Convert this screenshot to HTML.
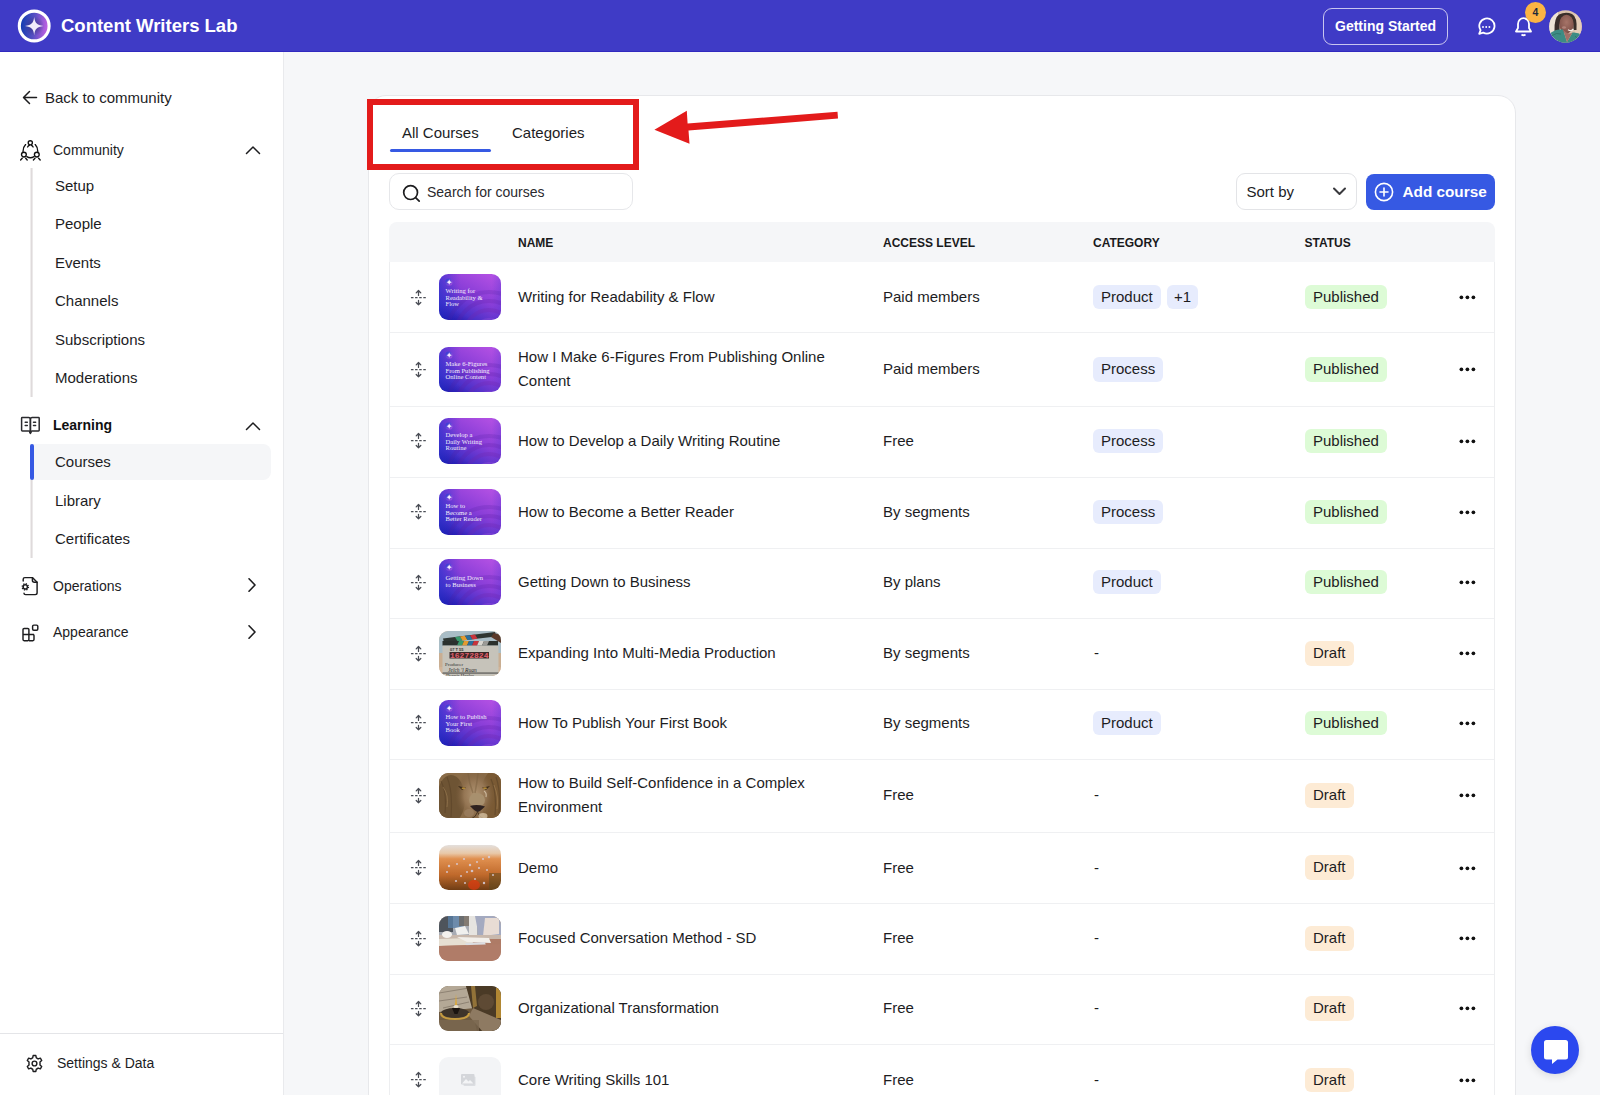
<!DOCTYPE html>
<html><head><meta charset="utf-8">
<style>
*{box-sizing:border-box;margin:0;padding:0}
html,body{width:1600px;height:1095px;overflow:hidden}
body{position:relative;background:#F6F7F9;font-family:"Liberation Sans",sans-serif;color:#1D1D1F}
.a{position:absolute}
.t{position:absolute;white-space:nowrap;line-height:20px;height:20px}
#hdr{left:0;top:0;width:1600px;height:52px;background:#3F3BC6;border-bottom:1px solid #3129BF}
#side{left:0;top:52px;width:284px;height:1043px;background:#fff;border-right:1px solid #E9EAED}
.s14{font-size:14px}
.s15{font-size:15px}
.vline{position:absolute;width:3px;background:linear-gradient(90deg,#EFEDED 0,#EFEDED 33%,#DFDADB 33%,#DFDADB 66%,#EBE9E9 66%);left:30px}
#card{left:368px;top:95px;width:1148px;height:1100px;background:#fff;border:1px solid #E7E8EB;border-radius:18px}
.row{position:absolute;left:389px;width:1106px;border-bottom:1px solid #EFF0F2}
.thumb{position:absolute;left:439px;width:62.4px;height:45.6px;border-radius:9.5px;overflow:hidden}
.tag{position:absolute;height:24.6px;line-height:24.6px;border-radius:6px;font-size:15px;padding:0 8px;white-space:nowrap}
.cat{background:#E7ECFD}
.pub{background:#DDFBD6}
.dra{background:#FDEBD5}
</style></head>
<body>
<svg width="0" height="0" style="position:absolute"><defs><linearGradient id="pg" x1="0.9" y1="0" x2="0.15" y2="1"><stop offset="0" stop-color="#B652E4"/><stop offset="0.45" stop-color="#8A3ED8"/><stop offset="0.8" stop-color="#4A30C8"/><stop offset="1" stop-color="#1C14A6"/></linearGradient><linearGradient id="pgl" x1="0" y1="0" x2="1" y2="1"><stop offset="0" stop-color="#2040D0"/><stop offset="1" stop-color="#B050E0"/></linearGradient><linearGradient id="pg2" x1="0" y1="0" x2="1" y2="0"><stop offset="0" stop-color="#2A34D0" stop-opacity="0.6"/><stop offset="0.35" stop-color="#2A34D0" stop-opacity="0"/><stop offset="0.85" stop-color="#3A30D0" stop-opacity="0"/><stop offset="1" stop-color="#3A30D0" stop-opacity="0.3"/></linearGradient></defs></svg>
<!-- HEADER -->
<div id="hdr" class="a">
  <svg class="a" style="left:17px;top:9px" width="34" height="34" viewBox="0 0 34 34">
    <defs><linearGradient id="lg" x1="0" y1="0.45" x2="1" y2="0.55"><stop offset="0" stop-color="#0A3AAE"/><stop offset="0.5" stop-color="#5A50C4"/><stop offset="1" stop-color="#CC62E6"/></linearGradient>
    <radialGradient id="lgs" cx="0.5" cy="0.5" r="0.5"><stop offset="0.35" stop-color="#302A70" stop-opacity="0.45"/><stop offset="1" stop-color="#302A70" stop-opacity="0"/></radialGradient></defs>
    <circle cx="17.2" cy="17" r="14.9" fill="url(#lg)" stroke="#fff" stroke-width="3.1"/>
    <circle cx="17.2" cy="17" r="10" fill="url(#lgs)"/>
    <path d="M17.2 8 C18 14.2 19.6 15.8 26.4 17 C19.6 18.2 18 19.8 17.2 26.2 C16.4 19.8 14.8 18.2 8 17 C14.8 15.8 16.4 14.2 17.2 8Z" fill="#F1ECFA"/>
  </svg>
  <div class="t" style="left:61px;top:16px;font-size:18.5px;font-weight:700;color:#fff;line-height:20px">Content Writers Lab</div>
  <div class="a" style="left:1323px;top:8px;width:125px;height:37px;border:1px solid #C9C6EF;border-radius:9px"></div>
  <div class="t" style="left:1335px;top:16px;font-size:14px;font-weight:700;color:#fff">Getting Started</div>
  <svg class="a" style="left:1476px;top:17px" width="20" height="20" viewBox="0 0 20 20" fill="none" stroke="#fff" stroke-width="1.8">
    <path d="M3.2 16.8 L4.6 13.2 A7.6 7.6 0 1 1 7.2 15.6 Z" stroke-linejoin="round"/>
    <circle cx="7" cy="10" r="0.95" fill="#fff" stroke="none"/><circle cx="10.2" cy="10" r="0.95" fill="#fff" stroke="none"/><circle cx="13.4" cy="10" r="0.95" fill="#fff" stroke="none"/>
  </svg>
  <svg class="a" style="left:1514px;top:16px" width="19" height="21" viewBox="0 0 19 21" fill="none" stroke="#fff" stroke-width="1.8">
    <path d="M2 15.5 L17 15.5 L15 12 L15 8 A5.5 5.8 0 0 0 4 8 L4 12 Z" stroke-linejoin="round"/>
    <path d="M7.5 18.5 Q9.5 20 11.5 18.5"/>
  </svg>
  <div class="a" style="left:1525px;top:2px;width:21px;height:21px;border-radius:50%;background:#FCB443;color:#1E2A3A;font-size:10.5px;font-weight:700;text-align:center;line-height:21px">4</div>
  <svg class="a" style="left:1548.5px;top:9.8px" width="33" height="33" viewBox="0 0 33 33"><defs><clipPath id="avc"><circle cx="16.5" cy="16.5" r="16.3"/></clipPath>
<radialGradient id="avf" cx="0.5" cy="0.4" r="0.6"><stop offset="0" stop-color="#A67468"/><stop offset="1" stop-color="#7E5048"/></radialGradient></defs>
<g clip-path="url(#avc)"><rect width="33" height="33" fill="#DCC3AE"/><rect x="0" y="0" width="9" height="33" fill="#EEE4D6"/><rect x="26" y="0" width="7" height="33" fill="#E6CDB8"/>
<path d="M5.5 21 Q5 8 10 4.5 Q16.5 1.5 23 4 Q28.5 7 27.5 20 L24.5 20 Q25 9 17 7 Q10 8 10.5 20 Z" fill="#3A2E2A"/>
<ellipse cx="17.5" cy="14" rx="7.2" ry="9.2" fill="url(#avf)"/>
<ellipse cx="15" cy="17.5" rx="2" ry="1.2" fill="#C89A90" opacity="0.6"/>
<path d="M19.5 20 Q22 21.5 24 19.5" stroke="#F4EEEA" stroke-width="1.4" fill="none" stroke-linecap="round"/>
<path d="M0 33 L0 25 Q4 19 14 19.5 L18 32 L23.5 22.5 Q30 22 34 26 L34 33 Z" fill="#3D8C84"/>
<path d="M14 19.5 L18 32 L23.5 22.5 Q19 25 15.5 21 Z" fill="#A27068"/>
<path d="M2 26 Q8 22 12 24 M26 26 L30 30" stroke="#2E7068" stroke-width="0.8" fill="none"/>
</g></svg>
</div>

<!-- SIDEBAR -->
<div id="side" class="a">
  <svg class="a" style="left:22px;top:38px" width="16" height="15" viewBox="0 0 16 15" fill="none" stroke="#1D1D1F" stroke-width="1.5" stroke-linecap="round" stroke-linejoin="round"><path d="M14.5 7.5 H1.8 M7.5 1.5 L1.5 7.5 L7.5 13.5"/></svg>
  <div class="t s15" style="left:45px;top:35.7px">Back to community</div>

  <svg class="a" style="left:20px;top:87px" width="22" height="22" viewBox="0 0 22 22" fill="none" stroke="#111" stroke-width="1.35" stroke-linecap="round">
    <circle cx="10.3" cy="3.8" r="2.1"/><path d="M7.6 8 Q8.3 6.6 9.4 6.4 M11.3 6.4 Q12.4 6.6 13.1 8"/>
    <circle cx="3.9" cy="15.6" r="2.4"/><path d="M0.6 21 L2.2 19.2 M5.7 19.2 L7.2 21"/>
    <circle cx="16.8" cy="15.6" r="2.4"/><path d="M13.4 21 L15 19.2 M18.6 19.2 L20.2 21"/>
    <path d="M5.6 5.6 Q3 8.2 3 12.6 M15.2 5.6 Q17.8 8.2 17.8 12.6 M6.8 17.6 Q10.4 20 14 17.6"/>
  </svg>
  <div class="t s14" style="left:53px;top:87.6px">Community</div>
  <svg class="a" style="left:245px;top:93px" width="16" height="10" viewBox="0 0 16 10" fill="none" stroke="#1D1D1F" stroke-width="1.5" stroke-linecap="round" stroke-linejoin="round"><path d="M1.5 8.5 L8 2 L14.5 8.5"/></svg>
  <div class="vline" style="top:116px;height:229px"></div>
  <div class="t s15" style="left:55px;top:123.7px">Setup</div>
  <div class="t s15" style="left:55px;top:162.2px">People</div>
  <div class="t s15" style="left:55px;top:200.7px">Events</div>
  <div class="t s15" style="left:55px;top:239.2px">Channels</div>
  <div class="t s15" style="left:55px;top:277.7px">Subscriptions</div>
  <div class="t s15" style="left:55px;top:316.2px">Moderations</div>

  <svg class="a" style="left:20px;top:364px" width="21" height="19" viewBox="0 0 21 19" fill="none" stroke="#2A2A2E" stroke-width="1.5" stroke-linejoin="round" stroke-linecap="round">
    <path d="M2.3 1.6 H8.6 Q10.4 1.6 10.4 3.4 V16.6 Q10.4 15 8.6 15 H2.3 Q1.6 15 1.6 14.3 V2.3 Q1.6 1.6 2.3 1.6 Z"/><path d="M18.5 1.6 H12.2 Q10.4 1.6 10.4 3.4 V16.6 Q10.4 15 12.2 15 H18.5 Q19.2 15 19.2 14.3 V2.3 Q19.2 1.6 18.5 1.6 Z"/>
    <path d="M5.2 6.2 H7.3 M5.2 9.5 H7.3 M13.5 6.2 H15.6 M13.5 9.5 H15.6" stroke-width="1.5"/><path d="M9.6 16.4 L10.4 17.6 L11.2 16.4" stroke-width="1.2"/>
  </svg>
  <div class="t s14" style="left:53px;top:363.3px;font-weight:700;color:#111">Learning</div>
  <svg class="a" style="left:245px;top:369px" width="16" height="10" viewBox="0 0 16 10" fill="none" stroke="#1D1D1F" stroke-width="1.5" stroke-linecap="round" stroke-linejoin="round"><path d="M1.5 8.5 L8 2 L14.5 8.5"/></svg>
  <div class="vline" style="top:392px;height:114px"></div>
  <div class="a" style="left:30px;top:392px;width:241px;height:36px;background:#F5F6F8;border-radius:0 8px 8px 0"></div>
  <div class="a" style="left:30px;top:392px;width:4px;height:36px;background:#3659E3;border-radius:2px"></div>
  <div class="t s15" style="left:55px;top:399.6px">Courses</div>
  <div class="t s15" style="left:55px;top:438.5px">Library</div>
  <div class="t s15" style="left:55px;top:476.9px">Certificates</div>

  <svg class="a" style="left:20px;top:523px" width="20" height="21" viewBox="0 0 20 21" fill="none" stroke="#1D1D1F" stroke-width="1.45" stroke-linejoin="round" stroke-linecap="round">
    <path d="M3.2 6 V4.3 Q3.2 2.6 4.9 2.6 H12.4 L17.1 7.2 V17.8 Q17.1 19.6 15.3 19.6 H5.6 Q4 19.6 4 18.2"/><path d="M12.4 2.6 V5.2 Q12.4 7.2 14.4 7.2 H17.1"/>
    <circle cx="5.3" cy="11.9" r="2.1"/><circle cx="5.3" cy="11.9" r="3.1" stroke-width="1.4" stroke-dasharray="1.25 1.185" stroke-linecap="butt"/>
  </svg>
  <div class="t s14" style="left:53px;top:523.7px">Operations</div>
  <svg class="a" style="left:247px;top:525px" width="10" height="16" viewBox="0 0 10 16" fill="none" stroke="#1D1D1F" stroke-width="1.6" stroke-linecap="round" stroke-linejoin="round"><path d="M2 1.8 L8 8 L2 14.2"/></svg>

  <svg class="a" style="left:20px;top:571px" width="21" height="20" viewBox="0 0 21 20" fill="none" stroke="#1D1D1F" stroke-width="1.45" stroke-linejoin="round">
    <path d="M3 6.5 Q3 5.4 4.1 5.4 H7.8 Q8.9 5.4 8.9 6.5 V16.6 Q8.9 17.7 7.8 17.7 H4.1 Q3 17.7 3 16.6 Z"/><path d="M3 11.4 H14 M8.9 11.4 H12.9 Q14 11.4 14 12.5 V16.6 Q14 17.7 12.9 17.7 H8.9"/>
    <rect x="12.6" y="2.1" width="5.2" height="5.2" rx="1.2"/>
  </svg>
  <div class="t s14" style="left:53px;top:570.3px">Appearance</div>
  <svg class="a" style="left:247px;top:572px" width="10" height="16" viewBox="0 0 10 16" fill="none" stroke="#1D1D1F" stroke-width="1.6" stroke-linecap="round" stroke-linejoin="round"><path d="M2 1.8 L8 8 L2 14.2"/></svg>

  <div class="a" style="left:0;top:981px;width:283px;height:1px;background:#E4E5E8"></div>
  <svg class="a" style="left:25px;top:1002px" width="19" height="19" viewBox="0 0 24 24" fill="none" stroke="#1D1D1F" stroke-width="1.8" stroke-linejoin="round">
    <path d="M10.3 2 H13.7 L14.3 4.9 Q15.6 5.4 16.6 6.2 L19.4 5.2 L21.1 8.2 L18.9 10.1 Q19.1 12 18.9 13.9 L21.1 15.8 L19.4 18.8 L16.6 17.8 Q15.6 18.6 14.3 19.1 L13.7 22 H10.3 L9.7 19.1 Q8.4 18.6 7.4 17.8 L4.6 18.8 L2.9 15.8 L5.1 13.9 Q4.9 12 5.1 10.1 L2.9 8.2 L4.6 5.2 L7.4 6.2 Q8.4 5.4 9.7 4.9 Z"/>
    <circle cx="12" cy="12" r="3"/>
  </svg>
  <div class="t s14" style="left:57px;top:1001px">Settings &amp; Data</div>
</div>

<!-- CARD -->
<div id="card" class="a"></div>
<div class="t" style="left:402px;top:122.7px;font-size:15px">All Courses</div>
<div class="t" style="left:512px;top:122.7px;font-size:15px">Categories</div>
<div class="a" style="left:389.5px;top:148.7px;width:101px;height:3.6px;border-radius:2px;background:#3659E3"></div>
<div class="a" style="left:389px;top:173px;width:244px;height:37px;border:1px solid #E6E7EA;border-radius:10px"></div>
<svg class="a" style="left:402px;top:184px" width="19" height="19" viewBox="0 0 19 19" fill="none" stroke="#1D1D1F" stroke-width="1.7" stroke-linecap="round"><circle cx="8.6" cy="8.6" r="6.9"/><path d="M13.6 13.6 L17.2 17.2"/></svg>
<div class="t" style="left:427px;top:182px;font-size:14px;color:#2A2A2E">Search for courses</div>
<div class="a" style="left:1236px;top:173px;width:121px;height:37px;border:1px solid #E3E4E7;border-radius:9px"></div>
<div class="t" style="left:1246.5px;top:182px;font-size:15px">Sort by</div>
<svg class="a" style="left:1332px;top:186px" width="15" height="11" viewBox="0 0 15 11" fill="none" stroke="#3A3A3E" stroke-width="2" stroke-linecap="round" stroke-linejoin="round"><path d="M2 2.5 L7.5 8 L13 2.5"/></svg>
<div class="a" style="left:1366px;top:174px;width:129px;height:36px;border-radius:8px;background:#3659E3"></div>
<svg class="a" style="left:1374px;top:182px" width="20" height="20" viewBox="0 0 20 20" fill="none" stroke="#fff" stroke-width="1.6" stroke-linecap="round"><circle cx="10" cy="10" r="8.6"/><path d="M10 6 V14 M6 10 H14"/></svg>
<div class="t" style="left:1402.5px;top:181.5px;font-size:15.3px;font-weight:700;color:#fff">Add course</div>
<div class="a" style="left:389px;top:222px;width:1106px;height:40px;background:#F5F6F8;border-radius:8px 8px 0 0"></div>
<div class="a" style="left:389px;top:262px;width:1px;height:900px;background:#EDEEF0"></div>
<div class="a" style="left:1494px;top:262px;width:1px;height:900px;background:#EDEEF0"></div>
<div class="t" style="left:518px;top:233px;font-size:12px;font-weight:700;color:#1A1A1C">NAME</div>
<div class="t" style="left:883px;top:233px;font-size:12px;font-weight:700;color:#1A1A1C">ACCESS LEVEL</div>
<div class="t" style="left:1093px;top:233px;font-size:12px;font-weight:700;color:#1A1A1C">CATEGORY</div>
<div class="t" style="left:1304.5px;top:233px;font-size:12px;font-weight:700;color:#1A1A1C">STATUS</div>
<div class="a" style="left:390px;top:332px;width:1104px;height:1px;background:#EFF0F2"></div>
<div class="a" style="left:390px;top:406px;width:1104px;height:1px;background:#EFF0F2"></div>
<div class="a" style="left:390px;top:477px;width:1104px;height:1px;background:#EFF0F2"></div>
<div class="a" style="left:390px;top:548px;width:1104px;height:1px;background:#EFF0F2"></div>
<div class="a" style="left:390px;top:618px;width:1104px;height:1px;background:#EFF0F2"></div>
<div class="a" style="left:390px;top:689px;width:1104px;height:1px;background:#EFF0F2"></div>
<div class="a" style="left:390px;top:759px;width:1104px;height:1px;background:#EFF0F2"></div>
<div class="a" style="left:390px;top:832px;width:1104px;height:1px;background:#EFF0F2"></div>
<div class="a" style="left:390px;top:903px;width:1104px;height:1px;background:#EFF0F2"></div>
<div class="a" style="left:390px;top:974px;width:1104px;height:1px;background:#EFF0F2"></div>
<div class="a" style="left:390px;top:1044px;width:1104px;height:1px;background:#EFF0F2"></div>
<svg class="a" style="left:410px;top:288.5px" width="17" height="17" viewBox="0 0 17 17" fill="none" stroke="#4A4D55" stroke-width="1.25" stroke-linecap="round" stroke-linejoin="round"><path d="M8.5 1.6 V6.4 M6.2 3.9 L8.5 1.5 L10.8 3.9 M8.5 11.3 V15.8 M6.2 13.5 L8.5 15.8 L10.8 13.5"/><path d="M1.5 8.7 H3 M5.6 8.7 H7.1 M9.7 8.7 H11.2 M13.8 8.7 H15.3" stroke-width="1.3"/></svg>
<div class="thumb th-p1" style="top:274.4px"><svg width="62" height="46" viewBox="0 0 62 46"><rect width="62" height="46" fill="url(#pg)"/><rect width="62" height="46" fill="url(#pg2)"/><circle cx="50" cy="60" r="16" fill="#B060E0" opacity="0.25"/><circle cx="50" cy="60" r="24" fill="none" stroke="#7028B0" stroke-width="4" opacity="0.3"/><circle cx="50" cy="60" r="33" fill="none" stroke="#6020A8" stroke-width="4" opacity="0.25"/><circle cx="50" cy="60" r="42" fill="none" stroke="#5020A0" stroke-width="4" opacity="0.2"/><circle cx="10" cy="8.2" r="3.6" fill="url(#pgl)"/><path d="M10.2 5.6 Q10.6 7.9 12.8 8.2 Q10.6 8.5 10.2 10.8 Q9.8 8.5 7.6 8.2 Q9.8 7.9 10.2 5.6Z" fill="#F4EEFF"/><text x="6.5" y="19.0" font-family="Liberation Serif" font-size="6.6" fill="#fff" opacity="0.92">Writing for</text><text x="6.5" y="25.6" font-family="Liberation Serif" font-size="6.6" fill="#fff" opacity="0.92">Readability &amp;</text><text x="6.5" y="32.2" font-family="Liberation Serif" font-size="6.6" fill="#fff" opacity="0.92">Flow</text></svg></div>
<div class="t" style="left:518px;top:287px;font-size:15px">Writing for Readability &amp; Flow</div>
<div class="t" style="left:883px;top:287px;font-size:15px">Paid members</div>
<div class="tag cat" style="left:1093px;top:284.9px">Product</div>
<div class="tag cat" style="left:1167px;padding:0 7px;top:284.9px">+1</div>
<div class="tag pub" style="left:1305px;top:284.9px">Published</div>
<svg class="a" style="left:1458px;top:294px" width="18" height="6" viewBox="0 0 18 6" fill="#111"><circle cx="3.4" cy="3.3" r="1.85"/><circle cx="9.4" cy="3.3" r="1.85"/><circle cx="15.4" cy="3.3" r="1.85"/></svg>
<svg class="a" style="left:410px;top:360.7px" width="17" height="17" viewBox="0 0 17 17" fill="none" stroke="#4A4D55" stroke-width="1.25" stroke-linecap="round" stroke-linejoin="round"><path d="M8.5 1.6 V6.4 M6.2 3.9 L8.5 1.5 L10.8 3.9 M8.5 11.3 V15.8 M6.2 13.5 L8.5 15.8 L10.8 13.5"/><path d="M1.5 8.7 H3 M5.6 8.7 H7.1 M9.7 8.7 H11.2 M13.8 8.7 H15.3" stroke-width="1.3"/></svg>
<div class="thumb th-p2" style="top:346.6px"><svg width="62" height="46" viewBox="0 0 62 46"><rect width="62" height="46" fill="url(#pg)"/><rect width="62" height="46" fill="url(#pg2)"/><circle cx="50" cy="60" r="16" fill="#B060E0" opacity="0.25"/><circle cx="50" cy="60" r="24" fill="none" stroke="#7028B0" stroke-width="4" opacity="0.3"/><circle cx="50" cy="60" r="33" fill="none" stroke="#6020A8" stroke-width="4" opacity="0.25"/><circle cx="50" cy="60" r="42" fill="none" stroke="#5020A0" stroke-width="4" opacity="0.2"/><circle cx="10" cy="8.2" r="3.6" fill="url(#pgl)"/><path d="M10.2 5.6 Q10.6 7.9 12.8 8.2 Q10.6 8.5 10.2 10.8 Q9.8 8.5 7.6 8.2 Q9.8 7.9 10.2 5.6Z" fill="#F4EEFF"/><text x="6.5" y="19.0" font-family="Liberation Serif" font-size="6.6" fill="#fff" opacity="0.92">Make 6-Figures</text><text x="6.5" y="25.6" font-family="Liberation Serif" font-size="6.6" fill="#fff" opacity="0.92">From Publishing</text><text x="6.5" y="32.2" font-family="Liberation Serif" font-size="6.6" fill="#fff" opacity="0.92">Online Content</text></svg></div>
<div class="t" style="left:518px;top:345.0px;font-size:15px;line-height:24.3px;height:48.6px">How I Make 6-Figures From Publishing Online<br>Content</div>
<div class="t" style="left:883px;top:359.2px;font-size:15px">Paid members</div>
<div class="tag cat" style="left:1093px;top:357.1px">Process</div>
<div class="tag pub" style="left:1305px;top:357.1px">Published</div>
<svg class="a" style="left:1458px;top:366.2px" width="18" height="6" viewBox="0 0 18 6" fill="#111"><circle cx="3.4" cy="3.3" r="1.85"/><circle cx="9.4" cy="3.3" r="1.85"/><circle cx="15.4" cy="3.3" r="1.85"/></svg>
<svg class="a" style="left:410px;top:432.2px" width="17" height="17" viewBox="0 0 17 17" fill="none" stroke="#4A4D55" stroke-width="1.25" stroke-linecap="round" stroke-linejoin="round"><path d="M8.5 1.6 V6.4 M6.2 3.9 L8.5 1.5 L10.8 3.9 M8.5 11.3 V15.8 M6.2 13.5 L8.5 15.8 L10.8 13.5"/><path d="M1.5 8.7 H3 M5.6 8.7 H7.1 M9.7 8.7 H11.2 M13.8 8.7 H15.3" stroke-width="1.3"/></svg>
<div class="thumb th-p3" style="top:418.1px"><svg width="62" height="46" viewBox="0 0 62 46"><rect width="62" height="46" fill="url(#pg)"/><rect width="62" height="46" fill="url(#pg2)"/><circle cx="50" cy="60" r="16" fill="#B060E0" opacity="0.25"/><circle cx="50" cy="60" r="24" fill="none" stroke="#7028B0" stroke-width="4" opacity="0.3"/><circle cx="50" cy="60" r="33" fill="none" stroke="#6020A8" stroke-width="4" opacity="0.25"/><circle cx="50" cy="60" r="42" fill="none" stroke="#5020A0" stroke-width="4" opacity="0.2"/><circle cx="10" cy="8.2" r="3.6" fill="url(#pgl)"/><path d="M10.2 5.6 Q10.6 7.9 12.8 8.2 Q10.6 8.5 10.2 10.8 Q9.8 8.5 7.6 8.2 Q9.8 7.9 10.2 5.6Z" fill="#F4EEFF"/><text x="6.5" y="19.0" font-family="Liberation Serif" font-size="6.6" fill="#fff" opacity="0.92">Develop a</text><text x="6.5" y="25.6" font-family="Liberation Serif" font-size="6.6" fill="#fff" opacity="0.92">Daily Writing</text><text x="6.5" y="32.2" font-family="Liberation Serif" font-size="6.6" fill="#fff" opacity="0.92">Routine</text></svg></div>
<div class="t" style="left:518px;top:430.7px;font-size:15px">How to Develop a Daily Writing Routine</div>
<div class="t" style="left:883px;top:430.7px;font-size:15px">Free</div>
<div class="tag cat" style="left:1093px;top:428.6px">Process</div>
<div class="tag pub" style="left:1305px;top:428.6px">Published</div>
<svg class="a" style="left:1458px;top:437.7px" width="18" height="6" viewBox="0 0 18 6" fill="#111"><circle cx="3.4" cy="3.3" r="1.85"/><circle cx="9.4" cy="3.3" r="1.85"/><circle cx="15.4" cy="3.3" r="1.85"/></svg>
<svg class="a" style="left:410px;top:503.2px" width="17" height="17" viewBox="0 0 17 17" fill="none" stroke="#4A4D55" stroke-width="1.25" stroke-linecap="round" stroke-linejoin="round"><path d="M8.5 1.6 V6.4 M6.2 3.9 L8.5 1.5 L10.8 3.9 M8.5 11.3 V15.8 M6.2 13.5 L8.5 15.8 L10.8 13.5"/><path d="M1.5 8.7 H3 M5.6 8.7 H7.1 M9.7 8.7 H11.2 M13.8 8.7 H15.3" stroke-width="1.3"/></svg>
<div class="thumb th-p4" style="top:489.1px"><svg width="62" height="46" viewBox="0 0 62 46"><rect width="62" height="46" fill="url(#pg)"/><rect width="62" height="46" fill="url(#pg2)"/><circle cx="50" cy="60" r="16" fill="#B060E0" opacity="0.25"/><circle cx="50" cy="60" r="24" fill="none" stroke="#7028B0" stroke-width="4" opacity="0.3"/><circle cx="50" cy="60" r="33" fill="none" stroke="#6020A8" stroke-width="4" opacity="0.25"/><circle cx="50" cy="60" r="42" fill="none" stroke="#5020A0" stroke-width="4" opacity="0.2"/><circle cx="10" cy="8.2" r="3.6" fill="url(#pgl)"/><path d="M10.2 5.6 Q10.6 7.9 12.8 8.2 Q10.6 8.5 10.2 10.8 Q9.8 8.5 7.6 8.2 Q9.8 7.9 10.2 5.6Z" fill="#F4EEFF"/><text x="6.5" y="19.0" font-family="Liberation Serif" font-size="6.6" fill="#fff" opacity="0.92">How to</text><text x="6.5" y="25.6" font-family="Liberation Serif" font-size="6.6" fill="#fff" opacity="0.92">Become a</text><text x="6.5" y="32.2" font-family="Liberation Serif" font-size="6.6" fill="#fff" opacity="0.92">Better Reader</text></svg></div>
<div class="t" style="left:518px;top:501.7px;font-size:15px">How to Become a Better Reader</div>
<div class="t" style="left:883px;top:501.7px;font-size:15px">By segments</div>
<div class="tag cat" style="left:1093px;top:499.6px">Process</div>
<div class="tag pub" style="left:1305px;top:499.6px">Published</div>
<svg class="a" style="left:1458px;top:508.7px" width="18" height="6" viewBox="0 0 18 6" fill="#111"><circle cx="3.4" cy="3.3" r="1.85"/><circle cx="9.4" cy="3.3" r="1.85"/><circle cx="15.4" cy="3.3" r="1.85"/></svg>
<svg class="a" style="left:410px;top:573.5px" width="17" height="17" viewBox="0 0 17 17" fill="none" stroke="#4A4D55" stroke-width="1.25" stroke-linecap="round" stroke-linejoin="round"><path d="M8.5 1.6 V6.4 M6.2 3.9 L8.5 1.5 L10.8 3.9 M8.5 11.3 V15.8 M6.2 13.5 L8.5 15.8 L10.8 13.5"/><path d="M1.5 8.7 H3 M5.6 8.7 H7.1 M9.7 8.7 H11.2 M13.8 8.7 H15.3" stroke-width="1.3"/></svg>
<div class="thumb th-p5" style="top:559.4px"><svg width="62" height="46" viewBox="0 0 62 46"><rect width="62" height="46" fill="url(#pg)"/><rect width="62" height="46" fill="url(#pg2)"/><circle cx="50" cy="60" r="16" fill="#B060E0" opacity="0.25"/><circle cx="50" cy="60" r="24" fill="none" stroke="#7028B0" stroke-width="4" opacity="0.3"/><circle cx="50" cy="60" r="33" fill="none" stroke="#6020A8" stroke-width="4" opacity="0.25"/><circle cx="50" cy="60" r="42" fill="none" stroke="#5020A0" stroke-width="4" opacity="0.2"/><circle cx="10" cy="8.2" r="3.6" fill="url(#pgl)"/><path d="M10.2 5.6 Q10.6 7.9 12.8 8.2 Q10.6 8.5 10.2 10.8 Q9.8 8.5 7.6 8.2 Q9.8 7.9 10.2 5.6Z" fill="#F4EEFF"/><text x="6.5" y="21.0" font-family="Liberation Serif" font-size="6.6" fill="#fff" opacity="0.92">Getting Down</text><text x="6.5" y="27.6" font-family="Liberation Serif" font-size="6.6" fill="#fff" opacity="0.92">to Business</text></svg></div>
<div class="t" style="left:518px;top:572px;font-size:15px">Getting Down to Business</div>
<div class="t" style="left:883px;top:572px;font-size:15px">By plans</div>
<div class="tag cat" style="left:1093px;top:569.9px">Product</div>
<div class="tag pub" style="left:1305px;top:569.9px">Published</div>
<svg class="a" style="left:1458px;top:579px" width="18" height="6" viewBox="0 0 18 6" fill="#111"><circle cx="3.4" cy="3.3" r="1.85"/><circle cx="9.4" cy="3.3" r="1.85"/><circle cx="15.4" cy="3.3" r="1.85"/></svg>
<svg class="a" style="left:410px;top:644.6px" width="17" height="17" viewBox="0 0 17 17" fill="none" stroke="#4A4D55" stroke-width="1.25" stroke-linecap="round" stroke-linejoin="round"><path d="M8.5 1.6 V6.4 M6.2 3.9 L8.5 1.5 L10.8 3.9 M8.5 11.3 V15.8 M6.2 13.5 L8.5 15.8 L10.8 13.5"/><path d="M1.5 8.7 H3 M5.6 8.7 H7.1 M9.7 8.7 H11.2 M13.8 8.7 H15.3" stroke-width="1.3"/></svg>
<div class="thumb th-clap" style="top:630.5px"><svg width="62" height="46" viewBox="0 0 62 46"><rect width="62" height="46" fill="#C9AE92"/><rect width="62" height="22" fill="#A9BDC6"/><rect x="0" y="36" width="62" height="10" fill="#D2B498"/><polygon points="4,7.5 56,1 57,5.5 5,11.5" fill="#2F3632"/><polygon points="16,6 21,5.4 23.5,9.6 18.5,10.2" fill="#3A9A6C"/><polygon points="21,5.4 26,4.8 28.5,9 23.5,9.6" fill="#E39A30"/><polygon points="26,4.8 31,4.2 33.5,8.4 28.5,9" fill="#2A6E9C"/><polygon points="31,4.2 36,3.6 38.5,7.8 33.5,8.4" fill="#C8343C"/><polygon points="55,2 62,4 62,12 52,6" fill="#5A3A2A"/><rect x="3.5" y="10" width="55.5" height="4.6" fill="#2B312D"/><polygon points="18,14.6 20,10 25,10 23,14.6" fill="#3A9A6C"/><polygon points="23,14.6 25,10 30,10 28,14.6" fill="#E39A30"/><polygon points="28,14.6 30,10 35,10 33,14.6" fill="#2A6E9C"/><polygon points="33,14.6 35,10 40,10 38,14.6" fill="#C8343C"/><polygon points="38,14.6 40,10 45,10 43,14.6" fill="#D8D6D0"/><polygon points="43,14.6 45,10 50,10 48,14.6" fill="#9A9A96"/><rect x="3.5" y="14.6" width="56" height="31.4" fill="#C6C3BA"/><text x="11" y="19.5" font-family="Liberation Sans" font-size="4" font-weight="700" fill="#333">07   T    55</text><rect x="10.5" y="21" width="39.5" height="6.5" fill="#3A2828"/><text x="11" y="27" font-family="Liberation Mono" font-size="7.2" font-weight="700" fill="#E0606E" textLength="38.5" lengthAdjust="spacingAndGlyphs">16272824</text><text x="6" y="34.5" font-family="Liberation Serif" font-size="5" fill="#333">Producer</text><text x="9" y="40.5" font-family="Liberation Serif" font-style="italic" font-size="5.5" fill="#2a2a2a">Jelch 'l Ruan</text><rect x="3.5" y="41.6" width="56" height="0.9" fill="#333"/><text x="7" y="46" font-family="Liberation Serif" font-size="4.8" fill="#333">Dennis  Haylar</text></svg></div>
<div class="t" style="left:518px;top:643.1px;font-size:15px">Expanding Into Multi-Media Production</div>
<div class="t" style="left:883px;top:643.1px;font-size:15px">By segments</div>
<div class="t" style="left:1094px;top:643.1px;font-size:15px">-</div>
<div class="tag dra" style="left:1305px;top:641.0px">Draft</div>
<svg class="a" style="left:1458px;top:650.1px" width="18" height="6" viewBox="0 0 18 6" fill="#111"><circle cx="3.4" cy="3.3" r="1.85"/><circle cx="9.4" cy="3.3" r="1.85"/><circle cx="15.4" cy="3.3" r="1.85"/></svg>
<svg class="a" style="left:410px;top:714.4px" width="17" height="17" viewBox="0 0 17 17" fill="none" stroke="#4A4D55" stroke-width="1.25" stroke-linecap="round" stroke-linejoin="round"><path d="M8.5 1.6 V6.4 M6.2 3.9 L8.5 1.5 L10.8 3.9 M8.5 11.3 V15.8 M6.2 13.5 L8.5 15.8 L10.8 13.5"/><path d="M1.5 8.7 H3 M5.6 8.7 H7.1 M9.7 8.7 H11.2 M13.8 8.7 H15.3" stroke-width="1.3"/></svg>
<div class="thumb th-p7" style="top:700.3px"><svg width="62" height="46" viewBox="0 0 62 46"><rect width="62" height="46" fill="url(#pg)"/><rect width="62" height="46" fill="url(#pg2)"/><circle cx="50" cy="60" r="16" fill="#B060E0" opacity="0.25"/><circle cx="50" cy="60" r="24" fill="none" stroke="#7028B0" stroke-width="4" opacity="0.3"/><circle cx="50" cy="60" r="33" fill="none" stroke="#6020A8" stroke-width="4" opacity="0.25"/><circle cx="50" cy="60" r="42" fill="none" stroke="#5020A0" stroke-width="4" opacity="0.2"/><circle cx="10" cy="8.2" r="3.6" fill="url(#pgl)"/><path d="M10.2 5.6 Q10.6 7.9 12.8 8.2 Q10.6 8.5 10.2 10.8 Q9.8 8.5 7.6 8.2 Q9.8 7.9 10.2 5.6Z" fill="#F4EEFF"/><text x="6.5" y="19.0" font-family="Liberation Serif" font-size="6.6" fill="#fff" opacity="0.92">How to Publish</text><text x="6.5" y="25.6" font-family="Liberation Serif" font-size="6.6" fill="#fff" opacity="0.92">Your First</text><text x="6.5" y="32.2" font-family="Liberation Serif" font-size="6.6" fill="#fff" opacity="0.92">Book</text></svg></div>
<div class="t" style="left:518px;top:712.9px;font-size:15px">How To Publish Your First Book</div>
<div class="t" style="left:883px;top:712.9px;font-size:15px">By segments</div>
<div class="tag cat" style="left:1093px;top:710.8px">Product</div>
<div class="tag pub" style="left:1305px;top:710.8px">Published</div>
<svg class="a" style="left:1458px;top:719.9px" width="18" height="6" viewBox="0 0 18 6" fill="#111"><circle cx="3.4" cy="3.3" r="1.85"/><circle cx="9.4" cy="3.3" r="1.85"/><circle cx="15.4" cy="3.3" r="1.85"/></svg>
<svg class="a" style="left:410px;top:786.9px" width="17" height="17" viewBox="0 0 17 17" fill="none" stroke="#4A4D55" stroke-width="1.25" stroke-linecap="round" stroke-linejoin="round"><path d="M8.5 1.6 V6.4 M6.2 3.9 L8.5 1.5 L10.8 3.9 M8.5 11.3 V15.8 M6.2 13.5 L8.5 15.8 L10.8 13.5"/><path d="M1.5 8.7 H3 M5.6 8.7 H7.1 M9.7 8.7 H11.2 M13.8 8.7 H15.3" stroke-width="1.3"/></svg>
<div class="thumb th-lion" style="top:772.8px"><svg width="62" height="46" viewBox="0 0 62 46"><defs><radialGradient id="lf" cx="0.5" cy="0.5" r="0.5"><stop offset="0" stop-color="#B09472"/><stop offset="0.55" stop-color="#957654"/><stop offset="1" stop-color="#7A5C3C" stop-opacity="0"/></radialGradient></defs><rect width="62" height="46" fill="#7C6040"/><path d="M0 0 H62 V46 H0Z" fill="#8A6C48"/><ellipse cx="12" cy="26" rx="14" ry="24" fill="#6E5434"/><ellipse cx="54" cy="24" rx="12" ry="26" fill="#7A5A34"/><ellipse cx="36" cy="22" rx="20" ry="26" fill="url(#lf)"/><path d="M2 8 Q8 20 6 40 M8 4 Q14 18 12 44 M52 6 Q58 20 56 42 M57 4 Q62 18 60 40" stroke="#5A4228" stroke-width="1.2" fill="none" opacity="0.6"/><path d="M4 14 Q10 22 8 34 M55 12 Q60 24 58 36" stroke="#A8885C" stroke-width="1" fill="none" opacity="0.5"/><path d="M29 0 Q30 10 34 20 M39 0 Q38 10 36 20" stroke="#7A6040" stroke-width="1.5" fill="none" opacity="0.5"/><ellipse cx="38" cy="27" rx="8" ry="7" fill="#A8906E"/><path d="M19 13 L27 14.8 L23 17Z" fill="#3A2A18"/><path d="M51 13 L43 14.8 L47 17Z" fill="#3A2A18"/><ellipse cx="24.5" cy="15.2" rx="2" ry="1" fill="#B08838"/><ellipse cx="46" cy="15.2" rx="2" ry="1" fill="#B08838"/><path d="M45 18 Q48 20 47 24" stroke="#E0D0B8" stroke-width="1.2" fill="none" opacity="0.7"/><path d="M31 33 Q38 31 46 33.5 Q41 38.5 38.5 39 Q35.5 38 31 33Z" fill="#2E2220"/><path d="M38.5 39 Q37 44 32 46 M38.5 39 Q40 44 45 46" stroke="#4A3620" stroke-width="1" fill="none"/><ellipse cx="44" cy="43" rx="4.5" ry="3" fill="#D8C4A4" opacity="0.75"/><ellipse cx="30" cy="40" rx="5" ry="4" fill="#9E8262" opacity="0.7"/></svg></div>
<div class="t" style="left:518px;top:771.1999999999999px;font-size:15px;line-height:24.3px;height:48.6px">How to Build Self-Confidence in a Complex<br>Environment</div>
<div class="t" style="left:883px;top:785.4px;font-size:15px">Free</div>
<div class="t" style="left:1094px;top:785.4px;font-size:15px">-</div>
<div class="tag dra" style="left:1305px;top:783.3px">Draft</div>
<svg class="a" style="left:1458px;top:792.4px" width="18" height="6" viewBox="0 0 18 6" fill="#111"><circle cx="3.4" cy="3.3" r="1.85"/><circle cx="9.4" cy="3.3" r="1.85"/><circle cx="15.4" cy="3.3" r="1.85"/></svg>
<svg class="a" style="left:410px;top:859.0px" width="17" height="17" viewBox="0 0 17 17" fill="none" stroke="#4A4D55" stroke-width="1.25" stroke-linecap="round" stroke-linejoin="round"><path d="M8.5 1.6 V6.4 M6.2 3.9 L8.5 1.5 L10.8 3.9 M8.5 11.3 V15.8 M6.2 13.5 L8.5 15.8 L10.8 13.5"/><path d="M1.5 8.7 H3 M5.6 8.7 H7.1 M9.7 8.7 H11.2 M13.8 8.7 H15.3" stroke-width="1.3"/></svg>
<div class="thumb th-flow" style="top:844.9px"><svg width="62" height="46" viewBox="0 0 62 46"><defs><linearGradient id="fl" x1="0" y1="0" x2="0" y2="1"><stop offset="0" stop-color="#E4DFDC"/><stop offset="0.18" stop-color="#E8C8A8"/><stop offset="0.3" stop-color="#E09050"/><stop offset="0.65" stop-color="#C06A2C"/><stop offset="1" stop-color="#6A3A14"/></linearGradient></defs><rect width="62" height="46" fill="url(#fl)"/><ellipse cx="35" cy="40" rx="6" ry="5" fill="#E03A10" opacity="0.7"/><rect x="50" y="28" width="12" height="18" fill="#5A4A20" opacity="0.5"/><g fill="#D8D0E0" opacity="0.85"><circle cx="10" cy="21" r="1.2"/><circle cx="18" cy="19" r="1"/><circle cx="25" cy="14" r="1.1"/><circle cx="31" cy="20" r="1.2"/><circle cx="38" cy="17" r="1"/><circle cx="44" cy="14" r="1.1"/><circle cx="50" cy="12" r="1.2"/><circle cx="33" cy="26" r="1.3"/><circle cx="28" cy="27" r="1"/><circle cx="40" cy="23" r="1.1"/><circle cx="22" cy="31" r="1"/><circle cx="17" cy="36" r="1.1"/><circle cx="36" cy="34" r="1"/><circle cx="45" cy="38" r="1.2"/><circle cx="8" cy="27" r="1"/><circle cx="48" cy="25" r="1"/><circle cx="54" cy="30" r="1"/><circle cx="26" cy="38" r="1"/></g></svg></div>
<div class="t" style="left:518px;top:857.5px;font-size:15px">Demo</div>
<div class="t" style="left:883px;top:857.5px;font-size:15px">Free</div>
<div class="t" style="left:1094px;top:857.5px;font-size:15px">-</div>
<div class="tag dra" style="left:1305px;top:855.4px">Draft</div>
<svg class="a" style="left:1458px;top:864.5px" width="18" height="6" viewBox="0 0 18 6" fill="#111"><circle cx="3.4" cy="3.3" r="1.85"/><circle cx="9.4" cy="3.3" r="1.85"/><circle cx="15.4" cy="3.3" r="1.85"/></svg>
<svg class="a" style="left:410px;top:929.6px" width="17" height="17" viewBox="0 0 17 17" fill="none" stroke="#4A4D55" stroke-width="1.25" stroke-linecap="round" stroke-linejoin="round"><path d="M8.5 1.6 V6.4 M6.2 3.9 L8.5 1.5 L10.8 3.9 M8.5 11.3 V15.8 M6.2 13.5 L8.5 15.8 L10.8 13.5"/><path d="M1.5 8.7 H3 M5.6 8.7 H7.1 M9.7 8.7 H11.2 M13.8 8.7 H15.3" stroke-width="1.3"/></svg>
<div class="thumb th-desk" style="top:915.5px"><svg width="62" height="46" viewBox="0 0 62 46"><rect width="62" height="46" fill="#AE7B66"/><rect width="62" height="22" fill="#A8ACB4"/><rect x="0" y="0" width="14" height="16" fill="#4E545C"/><rect x="9" y="0" width="16" height="12" fill="#5A80A8" opacity="0.75"/><rect x="20" y="0" width="10" height="10" fill="#6A5A48" opacity="0.6"/><rect x="30" y="0" width="8" height="20" fill="#E6E4E0"/><path d="M36 0 L62 0 L62 20 L40 22 Q38 10 36 0Z" fill="#A4AAC0"/><path d="M46 2 L60 2 L60 18 L44 20Z" fill="#E8DCD4"/><path d="M16 12 L26 10 L30 18 L18 19Z" fill="#F0F0EE"/><rect x="0" y="19" width="62" height="4" fill="#C8B8AC"/><path d="M0 23 L30 22 L36 29 L0 30Z" fill="#E6DFD2"/><path d="M18 21 L50 22 L52 27 L28 26Z" fill="#F2EFEA"/><ellipse cx="8" cy="18.5" rx="5" ry="3.5" fill="#F4F2EE"/><path d="M26 27 L46 26 L47 30 L28 31Z" fill="#DCDEE2"/><path d="M0 30 L62 28 L62 46 L0 46Z" fill="#B07C68"/></svg></div>
<div class="t" style="left:518px;top:928.1px;font-size:15px">Focused Conversation Method - SD</div>
<div class="t" style="left:883px;top:928.1px;font-size:15px">Free</div>
<div class="t" style="left:1094px;top:928.1px;font-size:15px">-</div>
<div class="tag dra" style="left:1305px;top:926.0px">Draft</div>
<svg class="a" style="left:1458px;top:935.1px" width="18" height="6" viewBox="0 0 18 6" fill="#111"><circle cx="3.4" cy="3.3" r="1.85"/><circle cx="9.4" cy="3.3" r="1.85"/><circle cx="15.4" cy="3.3" r="1.85"/></svg>
<svg class="a" style="left:410px;top:999.8px" width="17" height="17" viewBox="0 0 17 17" fill="none" stroke="#4A4D55" stroke-width="1.25" stroke-linecap="round" stroke-linejoin="round"><path d="M8.5 1.6 V6.4 M6.2 3.9 L8.5 1.5 L10.8 3.9 M8.5 11.3 V15.8 M6.2 13.5 L8.5 15.8 L10.8 13.5"/><path d="M1.5 8.7 H3 M5.6 8.7 H7.1 M9.7 8.7 H11.2 M13.8 8.7 H15.3" stroke-width="1.3"/></svg>
<div class="thumb th-comp" style="top:985.7px"><svg width="62" height="46" viewBox="0 0 62 46"><rect width="62" height="46" fill="#6E5A40"/><path d="M0 0 L27 0 L35 22 L0 26Z" fill="#B4A896"/><path d="M0 7 L30 2 M0 15 L28 11 M4 22 L30 16" stroke="#84786A" stroke-width="0.8"/><path d="M27 0 L62 0 L62 46 L38 46 L33 22Z" fill="#4A3A26"/><path d="M32 0 L36 0 L38 20 L34 22Z" fill="#B08A40" opacity="0.7"/><rect x="57" y="2" width="5" height="30" fill="#D4A238" opacity="0.75"/><ellipse cx="47" cy="16" rx="8" ry="8" fill="#5E4A34"/><path d="M34 22 L62 34 L62 46 L44 46 L30 30Z" fill="#8E7A62"/><ellipse cx="16" cy="27" rx="14" ry="5" fill="#3E342A"/><path d="M2 27 Q2 33 16 33 Q30 33 30 27" stroke="#C49A40" stroke-width="2" fill="none"/><path d="M17 8 L18.4 22 L15.6 22Z" fill="#D8A840"/><path d="M13 22 L21 22 L18.5 28 L15.5 28Z" fill="#1A1410"/><ellipse cx="17" cy="20.5" rx="2.5" ry="1.5" fill="#E8E0D0"/><rect x="0" y="34" width="40" height="12" fill="#7A6850" opacity="0.8"/></svg></div>
<div class="t" style="left:518px;top:998.3px;font-size:15px">Organizational Transformation</div>
<div class="t" style="left:883px;top:998.3px;font-size:15px">Free</div>
<div class="t" style="left:1094px;top:998.3px;font-size:15px">-</div>
<div class="tag dra" style="left:1305px;top:996.2px">Draft</div>
<svg class="a" style="left:1458px;top:1005.3px" width="18" height="6" viewBox="0 0 18 6" fill="#111"><circle cx="3.4" cy="3.3" r="1.85"/><circle cx="9.4" cy="3.3" r="1.85"/><circle cx="15.4" cy="3.3" r="1.85"/></svg>
<svg class="a" style="left:410px;top:1071.3px" width="17" height="17" viewBox="0 0 17 17" fill="none" stroke="#4A4D55" stroke-width="1.25" stroke-linecap="round" stroke-linejoin="round"><path d="M8.5 1.6 V6.4 M6.2 3.9 L8.5 1.5 L10.8 3.9 M8.5 11.3 V15.8 M6.2 13.5 L8.5 15.8 L10.8 13.5"/><path d="M1.5 8.7 H3 M5.6 8.7 H7.1 M9.7 8.7 H11.2 M13.8 8.7 H15.3" stroke-width="1.3"/></svg>
<div class="thumb th-ph" style="top:1057.2px"><svg width="62" height="46" viewBox="0 0 62 46"><rect width="62" height="46" fill="#F3F4F6"/><rect x="24.5" y="19.5" width="12" height="9.5" rx="1" fill="#DCDEE2"/><rect x="22" y="17" width="13.5" height="10.5" rx="1" fill="#D4D6DA"/><circle cx="25" cy="19.8" r="1" fill="#F3F4F6"/><path d="M23 26.5 L27 22 L29.5 24.5 L31 23 L34.5 26.5Z" fill="#F3F4F6"/></svg></div>
<div class="t" style="left:518px;top:1069.8px;font-size:15px">Core Writing Skills 101</div>
<div class="t" style="left:883px;top:1069.8px;font-size:15px">Free</div>
<div class="t" style="left:1094px;top:1069.8px;font-size:15px">-</div>
<div class="tag dra" style="left:1305px;top:1067.7px">Draft</div>
<svg class="a" style="left:1458px;top:1076.8px" width="18" height="6" viewBox="0 0 18 6" fill="#111"><circle cx="3.4" cy="3.3" r="1.85"/><circle cx="9.4" cy="3.3" r="1.85"/><circle cx="15.4" cy="3.3" r="1.85"/></svg>
<div class="a" style="left:367px;top:98.5px;width:272px;height:71px;border:6.8px solid #E31B1B"></div>
<svg class="a" style="left:0;top:0" width="1600" height="200" viewBox="0 0 1600 200"><path d="M837.5 111.8 L838 118.6 L688.5 130.5 L689.5 143.8 L654.4 129.8 L686.8 110.7 L687.6 123.5 Z" fill="#E31B1B"/></svg>
<div class="a" style="left:1531px;top:1026px;width:48px;height:48px;border-radius:50%;background:#2B48EF;box-shadow:0 2px 8px rgba(0,0,0,0.12)"></div>
<svg class="a" style="left:1542px;top:1038px" width="28" height="28" viewBox="0 0 28 28"><path d="M4.5 2 H23.5 Q26 2 26 4.5 V19 Q26 21.5 23.5 21.5 H15.5 L10 26 L10 21.5 H4.5 Q2 21.5 2 19 V4.5 Q2 2 4.5 2Z" fill="#fff"/></svg>
</body></html>
